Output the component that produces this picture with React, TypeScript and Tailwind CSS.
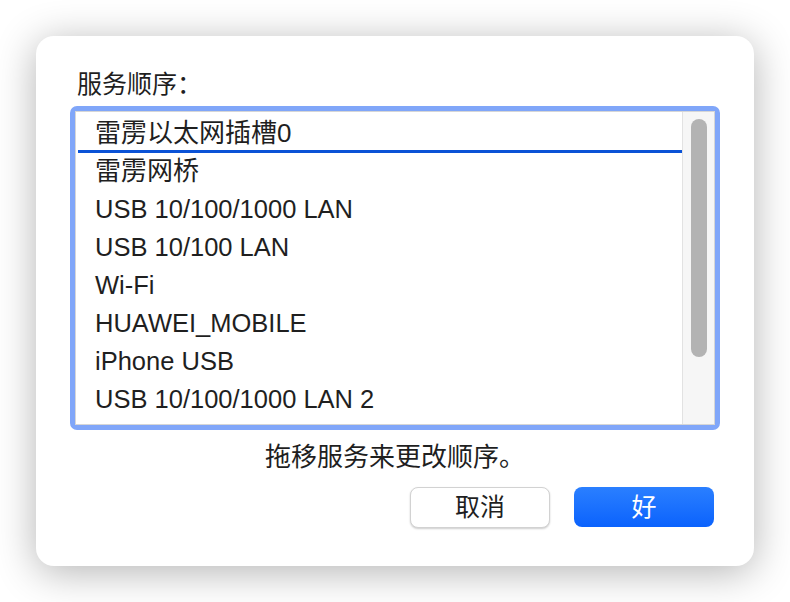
const rows = [
  { label: '雷雳以太网插槽0', cjk: true },
  { label: '雷雳网桥', cjk: true },
  { label: 'USB 10/100/1000 LAN', cjk: false },
  { label: 'USB 10/100 LAN', cjk: false },
  { label: 'Wi-Fi', cjk: false },
  { label: 'HUAWEI_MOBILE', cjk: false },
  { label: 'iPhone USB', cjk: false },
  { label: 'USB 10/100/1000 LAN 2', cjk: false },
]

export default function App() {
  return (
    <div className="w-[790px] h-[602px] bg-white pt-[36px] pl-[36px] font-['Liberation_Sans','Noto_Sans_CJK_SC',sans-serif] text-[#1f1f1f]">
      <div className="w-[718px] h-[530px] bg-white rounded-[18px] shadow-[0_6px_40px_rgba(0,0,0,0.3)] pt-[34px] px-[34px]">
        {/* 标题 */}
        <div className="h-[36px] pl-[7px] text-[25px] leading-[28px]">服务顺序：</div>

        {/* 列表 */}
        <div className="w-[650px] h-[324px] rounded-[7px] border-[5px] border-[#80a6f9]">
          <div className="h-full border border-[#d6d6d6] bg-white flex">
            <div className="flex-1 pt-[2px]">
              {rows.map((row, i) => (
                <div
                  key={row.label}
                  className={`relative h-[38px] pl-[19px] whitespace-nowrap ${
                    row.cjk ? 'text-[26px] leading-[38px]' : 'text-[25.5px] leading-[38px]'
                  }`}
                >
                  {row.label}
                  {i === 0 && (
                    <div className="absolute left-[2px] right-0 bottom-[-1px] h-[3px] bg-[#0a52d6]" />
                  )}
                </div>
              ))}
            </div>
            <div className="w-[32px] h-full border-l border-[#e2e2e2] bg-[#f6f6f6] pt-[7px] flex justify-center">
              <div className="w-[16px] h-[238px] rounded-full bg-[#b3b3b3]" />
            </div>
          </div>
        </div>

        {/* 说明 */}
        <div className="w-[650px] mt-[12px] text-center text-[26px] leading-[30px]">拖移服务来更改顺序。</div>

        {/* 按钮 */}
        <div className="w-[650px] mt-[15px] pr-[6px] flex justify-end gap-[24px]">
          <button className="w-[140px] h-[41px] rounded-[8px] bg-white border border-[#d2d2d2] shadow-[0_1px_2px_rgba(0,0,0,0.2)] text-[25px] leading-none text-[#1f1f1f]">
            取消
          </button>
          <button className="w-[140px] h-[40px] rounded-[8px] bg-linear-to-b from-[#2a7fff] to-[#0a62fd] text-[25px] leading-none text-white">
            好
          </button>
        </div>
      </div>
    </div>
  )
}
